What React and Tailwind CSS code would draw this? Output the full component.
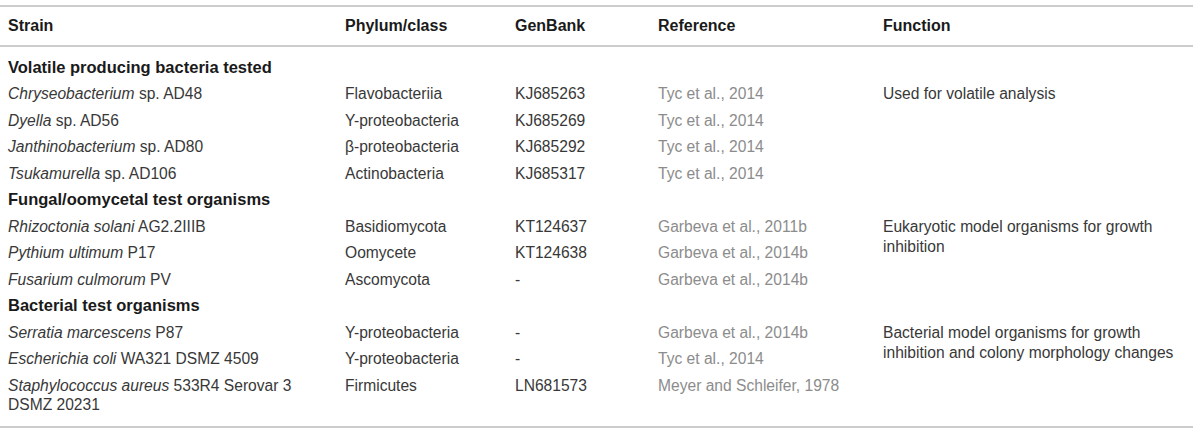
const sections = [
	{
		title: 'Volatile producing bacteria tested',
		fn: 'Used for volatile analysis',
		rows: [
			{ genus: 'Chryseobacterium', rest: ' sp. AD48', phylum: 'Flavobacteriia', gb: 'KJ685263', ref: 'Tyc et al., 2014' },
			{ genus: 'Dyella', rest: ' sp. AD56', phylum: 'Y-proteobacteria', gb: 'KJ685269', ref: 'Tyc et al., 2014' },
			{ genus: 'Janthinobacterium', rest: ' sp. AD80', phylum: 'β-proteobacteria', gb: 'KJ685292', ref: 'Tyc et al., 2014' },
			{ genus: 'Tsukamurella', rest: ' sp. AD106', phylum: 'Actinobacteria', gb: 'KJ685317', ref: 'Tyc et al., 2014' },
		],
	},
	{
		title: 'Fungal/oomycetal test organisms',
		fn: 'Eukaryotic model organisms for growth inhibition',
		rows: [
			{ genus: 'Rhizoctonia solani', rest: ' AG2.2IIIB', phylum: 'Basidiomycota', gb: 'KT124637', ref: 'Garbeva et al., 2011b' },
			{ genus: 'Pythium ultimum', rest: ' P17', phylum: 'Oomycete', gb: 'KT124638', ref: 'Garbeva et al., 2014b' },
			{ genus: 'Fusarium culmorum', rest: ' PV', phylum: 'Ascomycota', gb: '-', ref: 'Garbeva et al., 2014b' },
		],
	},
	{
		title: 'Bacterial test organisms',
		fn: 'Bacterial model organisms for growth inhibition and colony morphology changes',
		rows: [
			{ genus: 'Serratia marcescens', rest: ' P87', phylum: 'Y-proteobacteria', gb: '-', ref: 'Garbeva et al., 2014b' },
			{ genus: 'Escherichia coli', rest: ' WA321 DSMZ 4509', phylum: 'Y-proteobacteria', gb: '-', ref: 'Tyc et al., 2014' },
			{ genus: 'Staphylococcus aureus', rest: ' 533R4 Serovar 3 DSMZ 20231', phylum: 'Firmicutes', gb: 'LN681573', ref: 'Meyer and Schleifer, 1978' },
		],
	},
];

const cell = 'align-top py-[3.75px] leading-[19px]';

export default function App() {
	return (
		<div
			className="bg-white w-[1200px] h-[435px] pt-[5px] text-[15.6px] text-[#383838]"
			style={{ fontFamily: '"Liberation Sans", Arial, sans-serif' }}
		>
			<table className="w-[1193px] table-fixed border-collapse">
				<colgroup>
					<col className="w-[345px]" />
					<col className="w-[170px]" />
					<col className="w-[143px]" />
					<col className="w-[225px]" />
					<col />
				</colgroup>
				<thead>
					<tr className="border-y-2 border-[#cccccc] h-[40px] text-left text-[16px] text-[#1a1a1a]">
						<th className="pl-2 font-bold">Strain</th>
						<th className="font-bold">Phylum/class</th>
						<th className="font-bold">GenBank</th>
						<th className="font-bold">Reference</th>
						<th className="font-bold">Function</th>
					</tr>
				</thead>
				<tbody>
					<tr className="h-[8px]">
						<td colSpan={5} />
					</tr>
					{sections.map((s) => [
						<tr key={s.title}>
							<td colSpan={5} className={`${cell} pl-2 font-bold text-[16.5px] text-[#1a1a1a]`}>
								{s.title}
							</td>
						</tr>,
						...s.rows.map((r, i) => (
							<tr key={r.genus}>
								<td className={`${cell} pl-2 pr-[30px]`}>
									<i>{r.genus}</i>
									{r.rest}
								</td>
								<td className={cell}>{r.phylum}</td>
								<td className={cell}>{r.gb}</td>
								<td className={`${cell} text-[#8c8c8c]`}>{r.ref}</td>
								{i === 0 && (
									<td rowSpan={s.rows.length} className={`${cell} pr-2 leading-[20px]`}>
										{s.fn}
									</td>
								)}
							</tr>
						)),
					])}
					<tr className="h-[9px] border-b-2 border-[#cccccc]">
						<td colSpan={5} />
					</tr>
				</tbody>
			</table>
		</div>
	);
}
